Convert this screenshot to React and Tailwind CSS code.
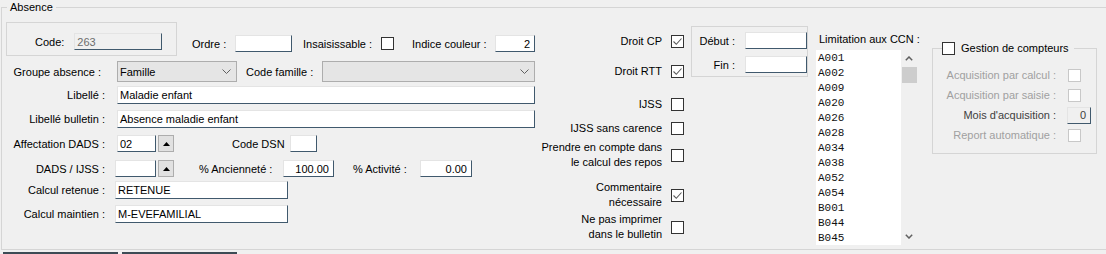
import React from 'react';

const Check = () => (
  <svg width="11" height="11" viewBox="0 0 11 11" className="block">
    <path d="M1.5 5.5 L4.3 8.3 L9.5 2.5" fill="none" stroke="#5a5a5a" strokeWidth="1.1" />
  </svg>
);

const CheckBox = ({ checked, disabled, className = '' }) => (
  <div
    className={`w-[13px] h-[13px] shrink-0 border flex items-center justify-center ${
      disabled ? 'bg-white border-[#c8c8c8]' : 'bg-white border-[#333333]'
    } ${className}`}
  >
    {checked && <Check />}
  </div>
);

const TextBox = ({ value = '', right, grey, className = '' }) => (
  <div
    className={`shrink-0 border border-[#e4e4e4] border-r-[#40596d] border-b-[#40596d] flex items-center px-[2px] whitespace-nowrap ${
      grey ? 'bg-[#f0f0f0] text-[#6d6d6d]' : 'bg-white text-black'
    } ${right ? 'justify-end pr-[4px]' : ''} ${className}`}
  >
    {value}
  </div>
);

const Chevron = () => (
  <svg width="9" height="5" viewBox="0 0 9 5" className="block">
    <path d="M0.5 0.5 L4.5 4.5 L8.5 0.5" fill="none" stroke="#606060" strokeWidth="1" />
  </svg>
);

const Select = ({ value, className = '' }) => (
  <div
    className={`shrink-0 h-[21px] bg-[#e5e5e5] border border-[#adadad] flex items-center justify-between pl-[2px] pr-[5px] ${className}`}
  >
    <span>{value}</span>
    <Chevron />
  </div>
);

const Spin = () => (
  <div className="ml-[2px] w-[16px] h-[17px] shrink-0 bg-[#e1e1e1] border border-[#adadad] flex items-center justify-center">
    <svg width="7" height="4" viewBox="0 0 7 4" className="block">
      <path d="M0 4 L3.5 0 L7 4 Z" fill="#000" />
    </svg>
  </div>
);

const Label = ({ children, className = '' }) => (
  <div className={`shrink-0 whitespace-nowrap ${className}`}>{children}</div>
);

const ccn = ['A001', 'A002', 'A009', 'A020', 'A026', 'A028', 'A034', 'A038', 'A052', 'A054', 'B001', 'B044', 'B045'];

export default function App() {
  return (
    <div
      className="w-[1106px] h-[254px] overflow-hidden bg-[#f0f0f0] text-[11px] leading-[14px] text-black pt-[7px] pl-[1px]"
      style={{ fontFamily: '"Liberation Sans", Arial, sans-serif' }}
    >
      <div className="relative w-[1112px] h-[243px] border border-[#d5d5d5]">
        <div className="absolute -top-[8px] left-[5px] px-[3px] bg-[#f0f0f0]">Absence</div>

        <div className="flex items-start">
          {/* left form */}
          <div className="ml-[4px] w-[530px] shrink-0">
            <div className="flex items-start">
              <div className="mt-[14px] w-[171px] h-[34px] border border-[#d5d5d5] flex items-start pl-[28px] pt-[10px]">
                <div className="flex items-center">
                  <Label>Code:</Label>
                  <TextBox value="263" grey className="ml-[10px] w-[88px] h-[17px]" />
                </div>
              </div>
              <div className="mt-[27px] flex items-center h-[17px]">
                <Label className="ml-[15px] w-[35px]">Ordre :</Label>
                <TextBox className="ml-[8px] w-[57px] h-[17px]" />
                <Label className="ml-[11px] w-[69px]">Insaisissable :</Label>
                <CheckBox className="ml-[9px]" />
                <Label className="ml-[18px] w-[74px]">Indice couleur :</Label>
                <TextBox value="2" right className="ml-[9px] w-[40px] h-[17px]" />
              </div>
            </div>

            <div className="mt-[5px] flex items-center h-[21px]">
              <Label className="w-[95px] text-right">Groupe absence :</Label>
              <Select value="Famille" className="ml-[16px] w-[120px]" />
              <Label className="ml-[9px] w-[65px]">Code famille :</Label>
              <Select className="ml-[11px] w-[213px]" />
            </div>

            <div className="mt-[4px] flex items-center h-[18px]">
              <Label className="w-[99px] text-right">Libellé :</Label>
              <TextBox value="Maladie enfant" className="ml-[12px] w-[418px] h-[18px]" />
            </div>

            <div className="mt-[6px] flex items-center h-[18px]">
              <Label className="w-[99px] text-right">Libellé bulletin :</Label>
              <TextBox value="Absence maladie enfant" className="ml-[12px] w-[418px] h-[18px]" />
            </div>

            <div className="mt-[7px] flex items-center h-[17px]">
              <Label className="w-[99px] text-right">Affectation DADS :</Label>
              <TextBox value="02" className="ml-[12px] w-[39px] h-[17px]" />
              <Spin />
              <Label className="ml-[58px] w-[48px]">Code DSN</Label>
              <TextBox className="ml-[10px] w-[27px] h-[17px]" />
            </div>

            <div className="mt-[8px] flex items-center h-[17px]">
              <Label className="w-[99px] text-right">DADS / IJSS :</Label>
              <TextBox className="ml-[10px] w-[41px] h-[17px]" />
              <Spin />
              <Label className="ml-[25px] w-[73px]">% Ancienneté :</Label>
              <TextBox value="100.00" right className="ml-[11px] w-[51px] h-[17px]" />
              <Label className="ml-[19px] w-[56px]">% Activité :</Label>
              <TextBox value="0.00" right className="ml-[11px] w-[52px] h-[17px]" />
            </div>

            <div className="mt-[4px] flex items-center h-[18px]">
              <Label className="w-[99px] text-right">Calcul retenue :</Label>
              <TextBox value="RETENUE" className="ml-[10px] w-[173px] h-[18px]" />
            </div>

            <div className="mt-[6px] flex items-center h-[18px]">
              <Label className="w-[99px] text-right">Calcul maintien :</Label>
              <TextBox value="M-EVEFAMILIAL" className="ml-[10px] w-[173px] h-[18px]" />
            </div>
          </div>

          {/* checkbox column */}
          <div className="w-[149px] shrink-0 flex flex-col leading-[15px]">
            <div className="mt-[26px] h-[15px] flex items-center justify-end gap-[9px] pr-[1px]">
              <span>Droit CP</span>
              <CheckBox checked />
            </div>
            <div className="mt-[15px] h-[15px] flex items-center justify-end gap-[9px] pr-[1px]">
              <span>Droit RTT</span>
              <CheckBox checked />
            </div>
            <div className="mt-[18px] h-[15px] flex items-center justify-end gap-[9px] pr-[1px]">
              <span>IJSS</span>
              <CheckBox />
            </div>
            <div className="mt-[9px] h-[15px] flex items-center justify-end gap-[9px] pr-[1px]">
              <span>IJSS sans carence</span>
              <CheckBox />
            </div>
            <div className="mt-[4px] h-[30px] flex items-center justify-end gap-[9px] pr-[1px]">
              <span className="text-right whitespace-nowrap">
                Prendre en compte dans
                <br />
                le calcul des repos
              </span>
              <CheckBox />
            </div>
            <div className="mt-[10px] h-[30px] flex items-center justify-end gap-[9px] pr-[1px]">
              <span className="text-right whitespace-nowrap">
                Commentaire
                <br />
                nécessaire
              </span>
              <CheckBox checked />
            </div>
            <div className="mt-[2px] h-[30px] flex items-center justify-end gap-[9px] pr-[1px]">
              <span className="text-right whitespace-nowrap">
                Ne pas imprimer
                <br />
                dans le bulletin
              </span>
              <CheckBox />
            </div>
          </div>

          {/* début / fin */}
          <div className="ml-[6px] mt-[18px] w-[117px] h-[51px] shrink-0 border border-[#d5d5d5] pt-[5px] flex flex-col gap-[7px]">
            <div className="flex items-center h-[17px]">
              <Label className="w-[43px] text-right">Début :</Label>
              <TextBox className="ml-[10px] w-[62px] h-[17px]" />
            </div>
            <div className="flex items-center h-[17px]">
              <Label className="w-[43px] text-right">Fin :</Label>
              <TextBox className="ml-[10px] w-[62px] h-[17px]" />
            </div>
          </div>

          {/* CCN list */}
          <div className="ml-[8px] mt-[24px] w-[101px] shrink-0">
            <div className="pl-[3px] h-[14px] whitespace-nowrap">Limitation aux CCN :</div>
            <div className="mt-[4px] flex h-[195px]">
              <div
                className="w-[85px] bg-white pl-[2px] pt-[1px] text-[11px] leading-[15px] text-[#111]"
                style={{ fontFamily: '"Liberation Mono", "Courier New", monospace' }}
              >
                {ccn.map((c) => (
                  <div key={c}>{c}</div>
                ))}
              </div>
              <div className="w-[16px] flex flex-col items-center">
                <svg width="8" height="5" viewBox="0 0 8 5" className="mt-[6px] block">
                  <path d="M0.8 4.2 L4 1 L7.2 4.2" fill="none" stroke="#606060" strokeWidth="1.5" />
                </svg>
                <div className="mt-[6px] w-[15px] h-[16px] bg-[#cdcdcd]" />
                <div className="flex-1" />
                <svg width="8" height="5" viewBox="0 0 8 5" className="mb-[6px] block">
                  <path d="M0.8 0.8 L4 4 L7.2 0.8" fill="none" stroke="#606060" strokeWidth="1.5" />
                </svg>
              </div>
            </div>
          </div>

          {/* gestion de compteurs */}
          <div className="ml-[15px] mt-[40px] relative w-[165px] h-[106px] shrink-0 border border-[#d5d5d5] pt-[16px]">
            <div className="absolute -top-[8px] left-[9px] bg-[#f0f0f0] flex items-center gap-[6px] pr-[5px]">
              <CheckBox />
              <span>Gestion de compteurs</span>
            </div>
            <div className="flex items-center h-[20px] text-[#a0a0a0]">
              <Label className="w-[123px] text-right">Acquisition par calcul :</Label>
              <CheckBox disabled className="ml-[12px]" />
            </div>
            <div className="flex items-center h-[20px] text-[#a0a0a0]">
              <Label className="w-[123px] text-right">Acquisition par saisie :</Label>
              <CheckBox disabled className="ml-[12px]" />
            </div>
            <div className="flex items-center h-[20px] text-[#404040]">
              <Label className="w-[123px] text-right">Mois d'acquisition :</Label>
              <TextBox value="0" right grey className="ml-[11px] w-[24px] h-[17px] !text-[#404040]" />
            </div>
            <div className="flex items-center h-[20px] text-[#a0a0a0]">
              <Label className="w-[123px] text-right">Report automatique :</Label>
              <CheckBox disabled className="ml-[12px]" />
            </div>
          </div>
        </div>
      </div>

      <div className="mt-[2px] pl-[2px] flex gap-[4px]">
        <div className="w-[115px] h-[10px] border-t-2 border-[#3d4b55]" />
        <div className="w-[115px] h-[10px] border-t-2 border-[#3d4b55]" />
      </div>
    </div>
  );
}
